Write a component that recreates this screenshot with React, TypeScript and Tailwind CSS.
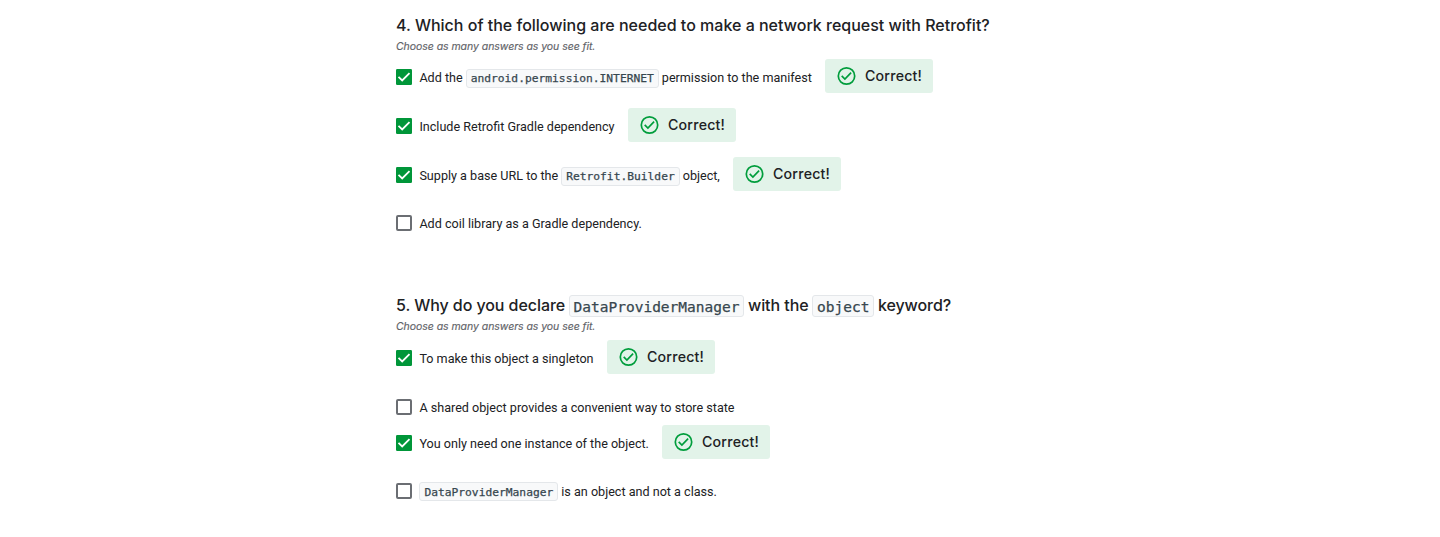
import type { ReactNode } from 'react';

function Checkbox({ checked }: { checked: boolean }) {
  return checked ? (
    <svg className="h-4 w-4 shrink-0" viewBox="0 0 16 16" role="checkbox" aria-checked="true">
      <rect width="16" height="16" rx="1.2" fill="#009639" />
      <path d="M2.5 7.9 6.2 11.5 13.5 4.2" fill="none" stroke="#fff" strokeWidth="1.8" />
    </svg>
  ) : (
    <span role="checkbox" aria-checked="false" className="h-4 w-4 shrink-0 rounded-[2px] border-2 border-[#6b6e73]" />
  );
}

function Code({ children }: { children: string }) {
  return (
    <code className="mx-[3px] inline-flex h-[19px] items-center rounded-[3px] border border-[#e4e7ea] bg-[#f8f9fa] px-1 pt-0.5 font-['DejaVu_Sans_Mono',monospace] text-[11.28px] leading-none text-[#37474f] [-webkit-text-stroke:0.25px_#37474f]">
      {children}
    </code>
  );
}

function HeadingCode({ children }: { children: string }) {
  return (
    <code className="mx-[3.5px] inline-flex h-[22px] items-center rounded-[3px] border border-[#e4e7ea] bg-[#f8f9fa] px-1 pt-[3px] font-['DejaVu_Sans_Mono',monospace] text-[14.5px] font-normal leading-none tracking-normal text-[#37474f] [-webkit-text-stroke:0.25px_#37474f]">
      {children}
    </code>
  );
}

function Correct() {
  return (
    <div className="flex h-[34px] w-[108px] shrink-0 items-center rounded-[3px] bg-[#e2f3e9] pl-3">
      <svg className="-ml-px h-5 w-5" viewBox="0 0 20 20" fill="none" stroke="#009d3c">
        <circle cx="10.5" cy="10" r="8.2" strokeWidth="1.7" />
        <path d="M5.7 9.9 8.9 13 15.1 6.7" strokeWidth="1.7" />
      </svg>
      <span className="ml-[9px] font-['Inter',sans-serif] text-[14.2px] font-medium leading-5 tracking-[0.2px] text-[#202124]">Correct!</span>
    </div>
  );
}

function Option({ checked = false, width, height, children }: { checked?: boolean; width: string; height: string; children: ReactNode }) {
  return (
    <div className={`flex items-start ${height}`}>
      <label className={`flex h-[35px] shrink-0 items-center gap-[7.4px] pt-px ${width}`}>
        <Checkbox checked={checked} />
        <span className="flex items-center whitespace-pre pt-0.5 font-['Roboto',sans-serif] text-[12.6px] leading-5 text-[#202124]">{children}</span>
      </label>
      {checked && <Correct />}
    </div>
  );
}

function Heading({ className = '', children }: { className?: string; children: ReactNode }) {
  return (
    <>
      <h2 className={`flex h-[23px] items-center whitespace-pre font-['Inter',sans-serif] text-[16px] font-medium text-[#202124] ${className}`}>{children}</h2>
      <p className="h-[18px] pt-px font-['Inter',sans-serif] text-[10.5px] italic leading-[18px] tracking-[-0.05px] text-[#5f6368] [-webkit-text-stroke:0.15px_#5f6368]">Choose as many answers as you see fit.</p>
    </>
  );
}

export default function App() {
  return (
    <main className="h-[537px] overflow-hidden bg-white pl-[396px] pt-[14px]">
      <section className="h-[280px]">
        <Heading className="pb-0.5">4. Which of the following are needed to make a network request with Retrofit?</Heading>
        <div className="pt-1">
          <Option checked width="w-[429px]" height="h-[49px]">
            Add the<Code>android.permission.INTERNET</Code>permission to the manifest
          </Option>
          <Option checked width="w-[232px]" height="h-[49px]">Include Retrofit Gradle dependency</Option>
          <Option checked width="w-[337px]" height="h-[48px]">
            Supply a base URL to the<Code>Retrofit.Builder</Code>object,
          </Option>
          <Option width="w-[337px]" height="h-[49px]">Add coil library as a Gradle dependency.</Option>
        </div>
      </section>
      <section>
        <Heading className="tracking-[-0.07px]">
          <span className="pb-0.5">5. Why do you declare</span>
          <HeadingCode>DataProviderManager</HeadingCode>
          <span className="pb-0.5">with the</span>
          <HeadingCode>object</HeadingCode>
          <span className="pb-0.5">keyword?</span>
        </Heading>
        <div className="pt-[5px]">
          <Option checked width="w-[211px]" height="h-[49px]">To make this object a singleton</Option>
          <Option width="w-[400px]" height="h-[36px]">A shared object provides a convenient way to store state</Option>
          <Option checked width="w-[266px]" height="h-[48px]">You only need one instance of the object.</Option>
          <Option width="w-[400px]" height="h-[49px]">
            <span className="-ml-[3px]"><Code>DataProviderManager</Code></span>is an object and not a class.
          </Option>
        </div>
      </section>
    </main>
  );
}
